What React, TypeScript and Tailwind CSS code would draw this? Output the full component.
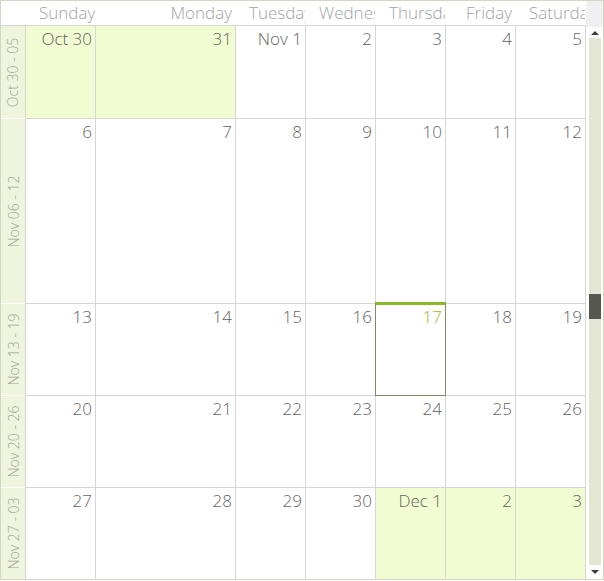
import React from "react";

type Day = { label: string; other?: boolean; today?: boolean };
type Week = { label: string; tall?: boolean; days: Day[] };

const headers = ["Sunday", "Monday", "Tuesday", "Wednesday", "Thursday", "Friday", "Saturday"];

// Monday column is twice as wide, Saturday carries the right border
const colWidths = ["w-[70px]", "w-[140px]", "w-[70px]", "w-[70px]", "w-[70px]", "w-[70px]", "w-[71px] border-r"];

const d = (label: string, extra: Partial<Day> = {}): Day => ({ label, ...extra });

const weeks: Week[] = [
  {
    label: "Oct 30 - 05",
    days: [d("Oct 30", { other: true }), d("31", { other: true }), d("Nov 1"), d("2"), d("3"), d("4"), d("5")],
  },
  { label: "Nov 06 - 12", tall: true, days: ["6", "7", "8", "9", "10", "11", "12"].map((x) => d(x)) },
  {
    label: "Nov 13 - 19",
    days: [d("13"), d("14"), d("15"), d("16"), d("17", { today: true }), d("18"), d("19")],
  },
  { label: "Nov 20 - 26", days: ["20", "21", "22", "23", "24", "25", "26"].map((x) => d(x)) },
  {
    label: "Nov 27 - 03",
    days: [d("27"), d("28"), d("29"), d("30"), d("Dec 1", { other: true }), d("2", { other: true }), d("3", { other: true })],
  },
];

function Scrollbar() {
  return (
    <div className="w-[17px] flex flex-col bg-white">
      <div className="h-[26px] bg-[#f0f0f0]"></div>
      <div className="h-[11px] flex items-center justify-center">
        <div className="w-0 h-0 border-l-[4px] border-r-[4px] border-b-[4px] border-l-transparent border-r-transparent border-b-[#3c3c3c]"></div>
      </div>
      <div className="flex-1 flex justify-center">
        <div className="w-[12px] bg-[#e3e6d3] flex flex-col">
          <div className="h-[256px]"></div>
          <div className="h-[25px] bg-[#56584f]"></div>
        </div>
      </div>
      <div className="h-[14px] flex items-center justify-center">
        <div className="w-0 h-0 border-l-[4px] border-r-[4px] border-t-[4px] border-l-transparent border-r-transparent border-t-[#3c3c3c]"></div>
      </div>
    </div>
  );
}

export default function App() {
  return (
    <div
      className="w-[604px] h-[580px] border border-[#d3d6c4] bg-white flex overflow-hidden font-light"
      style={{ fontFamily: '"Open Sans", "Noto Sans", sans-serif' }}
    >
      <div className="w-[585px] flex flex-col">
        {/* day names */}
        <div className="h-[25px] flex border-b border-[#d6d6d6]">
          <div className="w-[24px]"></div>
          {headers.map((h, i) => (
            <div
              key={h}
              className={`${colWidths[i]} border-transparent pl-[14px] pr-[3px] text-right text-[17px] leading-[24px] text-[#a3a3a3] whitespace-nowrap overflow-hidden`}
            >
              {h}
            </div>
          ))}
        </div>

        {weeks.map((w, wi) => (
          <div key={w.label} className={`flex ${w.tall ? "h-[185px]" : "h-[92px]"}`}>
            <div
              className={`w-[24px] bg-[#eff4dd] flex items-center justify-center ${wi > 0 ? "border-t border-white" : ""}`}
            >
              <span className="-rotate-90 whitespace-nowrap text-[14px] text-[#a3a59c]">{w.label}</span>
            </div>
            {w.days.map((day, di) => (
              <div
                key={di}
                className={`${colWidths[di]} relative border-l border-[#d6d6d6] ${wi > 0 ? "border-t" : ""} ${
                  day.other ? "bg-[#f1fcd2]" : "bg-white"
                } pr-[3px] text-right text-[17px] leading-[22px] pt-[2px] whitespace-nowrap ${
                  day.today ? "text-[#98bd22]" : "text-[#636363]"
                }`}
              >
                {day.label}
                {day.today && (
                  <div className="absolute -left-px -right-px -bottom-px top-[-2px] z-10 border border-[#7e8a68] border-t-[3px] border-t-[#8cb82b]"></div>
                )}
              </div>
            ))}
          </div>
        ))}
      </div>
      <Scrollbar />
    </div>
  );
}
